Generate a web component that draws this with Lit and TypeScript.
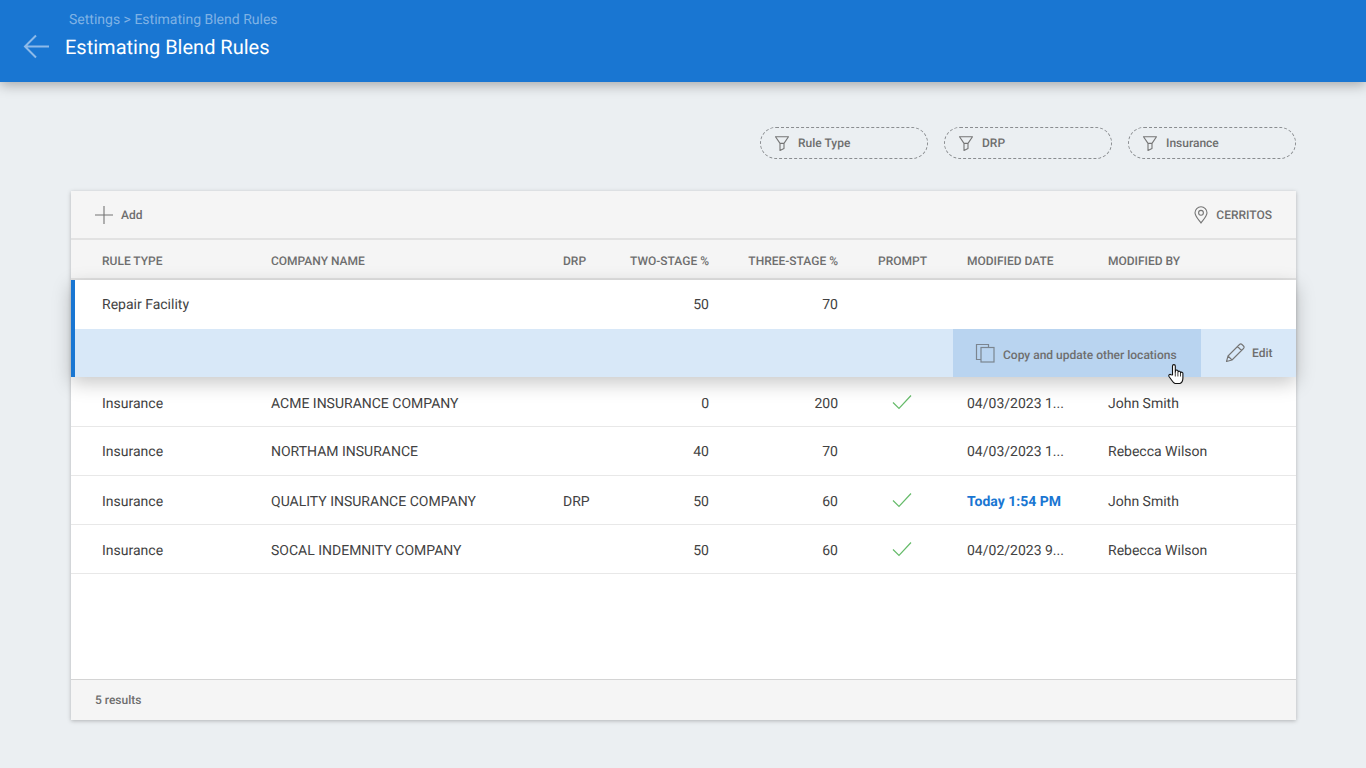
import { LitElement, html, css, svg } from "lit";
import { customElement } from "lit/decorators.js";

const filterIcon = svg`<path d="M1.500 1.800h13L10 8.400v5.200l-4 1.800V8.400z M6 8.400h4" fill="none" stroke="#757575" stroke-width="1.100" stroke-linejoin="round"/>`;

interface Row { type: string; company: string; drp: string; two: string; three: string; prompt: boolean; date: string; by: string; today?: boolean; h: string; }
const rows: Row[] = [
  { type: "Insurance", company: "ACME INSURANCE COMPANY", drp: "", two: "0", three: "200", prompt: true, date: "04/03/2023 1...", by: "John Smith", h: "first" },
  { type: "Insurance", company: "NORTHAM INSURANCE", drp: "", two: "40", three: "70", prompt: false, date: "04/03/2023 1...", by: "Rebecca Wilson", h: "mid" },
  { type: "Insurance", company: "QUALITY INSURANCE COMPANY", drp: "DRP", two: "50", three: "60", prompt: true, date: "Today 1:54 PM", by: "John Smith", today: true, h: "low" },
  { type: "Insurance", company: "SOCAL INDEMNITY COMPANY", drp: "", two: "50", three: "60", prompt: true, date: "04/02/2023 9...", by: "Rebecca Wilson", h: "low" },
];

@customElement("app-root")
export class AppRoot extends LitElement {
  static styles = css`
    :host { display: block; width: 1366px; height: 768px; overflow: hidden; background: #ebeff2; font-family: Roboto, "Liberation Sans", sans-serif; position: relative; text-rendering: geometricPrecision; -webkit-font-smoothing: antialiased; }
    .header { height: 82px; background: #1976d2; box-shadow: 0 3px 12px rgba(0,0,0,.3); display: flex; align-items: flex-start; box-sizing: border-box; padding: 12px 0 0 23px; gap: 15px; }
    .back { margin-top: 21px; width: 27px; height: 27px; flex: none; }
    .crumb { font-size: 14px; line-height: 16px; color: rgba(255,255,255,.45); margin-left: 4px; }
    .title { font-size: 20px; line-height: 24px; color: #fff; margin-top: 7px; }
    .filters { display: flex; justify-content: flex-end; gap: 16px; padding: 45px 70px 0 0; }
    .pill { width: 168px; height: 32px; box-sizing: border-box; border: 1px dashed #8a8d90; border-radius: 16px; display: flex; align-items: center; gap: 8px; padding: 0 0 0 13px; font-size: 12px; font-weight: 500; color: #6e6e6e; }
    .pill svg { width: 16px; height: 17px; flex: none; }
    .card { margin: 32px 70px 0 71px; height: 529px; background: #fff; box-shadow: 0 1px 4px rgba(0,0,0,.25); display: flex; flex-direction: column; position: relative; }
    .toolbar { height: 47px; flex: none; box-sizing: content-box; background: #f5f5f5; border-bottom: 2px solid #e2e2e2; display: flex; align-items: center; justify-content: space-between; padding: 0 24px; font-size: 12px; font-weight: 500; color: #6e6e6e; }
    .tool { display: flex; align-items: center; gap: 8px; padding-top: 1px; }
    .tool svg { margin-top: -1px; }
    .tool.loc { gap: 7px; }
    .grid { display: grid; grid-template-columns: 169px 292px 60px 86px 129px 129px 141px 1fr; padding-left: 31px; align-items: center; }
    .grid > div { white-space: nowrap; }
    .num { text-align: right; }
    .prompt { padding-left: 40px; }
    .prompt svg { display: block; width: 20px; height: 16px; margin-left: 14px; }
    .thead { height: 40px; flex: none; background: #f5f5f5; font-size: 12px; font-weight: 500; color: #6e6e6e; border-bottom: 2px solid #e2e2e2; box-sizing: border-box; padding-top: 3px; }
    .selected { position: relative; z-index: 1; border-left: 4px solid #1976d2; box-shadow: 0 6px 18px rgba(0,0,0,.22); height: 97px; flex: none; }
    .selected .grid { padding-left: 27px; }
    .row { font-size: 14px; color: #424242; }
    .sel-top { height: 49px; background: #fff; box-sizing: border-box; }
    .actions { height: 48px; background: #d8e8f8; display: flex; justify-content: flex-end; }
    .act { display: flex; align-items: center; font-size: 12px; font-weight: 500; color: #6e6e6e; }
    .copy { width: 248px; background: #b9d4f0; box-sizing: border-box; padding: 4px 0 0 22px; gap: 8px; }
    .copy svg { margin-top: -4px; }
    .edit { width: 95px; box-sizing: border-box; padding: 0 0 1px 24px; gap: 7px; }
    .r49 { height: 49px; flex: none; border-bottom: 1px solid #e8e8e8; box-sizing: border-box; }
    .first { height: 50px; padding-top: 4px; }
    .first .prompt svg { margin-top: -4px; }
    .mid { padding-top: 2px; }
    .low { padding-top: 3px; }
    .low .prompt svg { margin-top: -3px; }
    .today { color: #1976d2; font-weight: 700; }
    .spacer { flex: 1; }
    .footer { height: 41px; flex: none; background: #f5f5f5; border-top: 1px solid #d4d4d4; box-sizing: border-box; display: flex; align-items: center; padding: 0 24px; font-size: 12px; font-weight: 500; color: #6e6e6e; }
    .cursor { position: absolute; left: 1167px; top: 363px; width: 18px; height: 22px; z-index: 5; }
  `;

  private check() {
    return html`<svg viewBox="0 0 20 16"><path d="M1 8.500l6 6L19 1.500" fill="none" stroke="#66bb6a" stroke-width="1.200"/></svg>`;
  }

  render() {
    return html`
      <div class="header">
        <svg class="back" viewBox="0 0 27 27"><path d="M26 13.500H2M13 2.500L2 13.500l11 11" fill="none" stroke="#8dbae9" stroke-width="2"/></svg>
        <div>
          <div class="crumb">Settings &gt; Estimating Blend Rules</div>
          <div class="title">Estimating Blend Rules</div>
        </div>
      </div>
      <div class="filters">
        ${["Rule Type", "DRP", "Insurance"].map((f) => html`<div class="pill"><svg viewBox="0 0 16 17">${filterIcon}</svg><span>${f}</span></div>`)}
      </div>
      <div class="card">
        <div class="toolbar">
          <div class="tool"><svg width="18" height="18" viewBox="0 0 18 18"><path d="M9 0v18M0 9h18" stroke="#757575" stroke-width="1.100" fill="none"/></svg>Add</div>
          <div class="tool loc"><svg width="16" height="18" viewBox="0 0 16 18"><path d="M8 17C5 13 2 10 2 6.800a6 6 0 0 1 12 0C14 10 11 13 8 17z" fill="none" stroke="#757575" stroke-width="1.100"/><circle cx="8" cy="6.800" r="2.400" fill="none" stroke="#757575" stroke-width="1.100"/></svg>CERRITOS</div>
        </div>
        <div class="grid thead">
          <div>RULE TYPE</div><div>COMPANY NAME</div><div>DRP</div><div class="num">TWO-STAGE %</div><div class="num">THREE-STAGE %</div><div class="prompt">PROMPT</div><div>MODIFIED DATE</div><div>MODIFIED BY</div>
        </div>
        <div class="selected">
          <div class="grid row sel-top">
            <div>Repair Facility</div><div></div><div></div><div class="num">50</div><div class="num">70</div><div></div><div></div><div></div>
          </div>
          <div class="actions">
            <div class="act copy"><svg width="20" height="20" viewBox="0 0 20 20"><path d="M6 16.500H1.500V1.500h12V4" fill="none" stroke="#7b8590" stroke-width="1.200"/><rect x="6" y="4.500" width="13" height="14.500" fill="none" stroke="#7b8590" stroke-width="1.200"/></svg>Copy and update other locations</div>
            <div class="act edit"><svg width="20" height="20" viewBox="0 0 20 20"><path d="M1.500 18.500l1.500-5.500L14.500 1.500a1.800 1.800 0 0 1 2.500 0l1.500 1.500a1.800 1.800 0 0 1 0 2.500L7 17zM3 13l4 4M12.500 3.500l4 4" fill="none" stroke="#757575" stroke-width="1.100" stroke-linejoin="round"/></svg>Edit</div>
          </div>
        </div>
        ${rows.map((r) => html`
          <div class="grid row r49 ${r.h}">
            <div>${r.type}</div><div>${r.company}</div><div>${r.drp}</div><div class="num">${r.two}</div><div class="num">${r.three}</div>
            <div class="prompt">${r.prompt ? this.check() : ""}</div>
            <div class=${r.today ? "today" : ""}>${r.date}</div><div>${r.by}</div>
          </div>`)}
        <div class="spacer"></div>
        <div class="footer">5 results</div>
      </div>
      <svg class="cursor" viewBox="0 0 18 22"><path d="M5.500 12V3a1.400 1.400 0 0 1 2.800 0v6l.2-1.200a1.300 1.300 0 0 1 2.500.2l.1.800a1.300 1.300 0 0 1 2.400.4l.1.700a1.200 1.200 0 0 1 2.300.6v4.500c0 2.500-1.500 5-3 5.500H8c-1.500-.5-2.500-2-3.500-3.500L2 13.500c-.8-1.500.8-2.700 2-1.800z" fill="#fff" stroke="#111" stroke-width="1.100" stroke-linejoin="round"/><path d="M8.300 9v4.500M10.900 9v4.500M13.500 9.500v4" stroke="#111" stroke-width=".8" fill="none"/></svg>
    `;
  }
}
